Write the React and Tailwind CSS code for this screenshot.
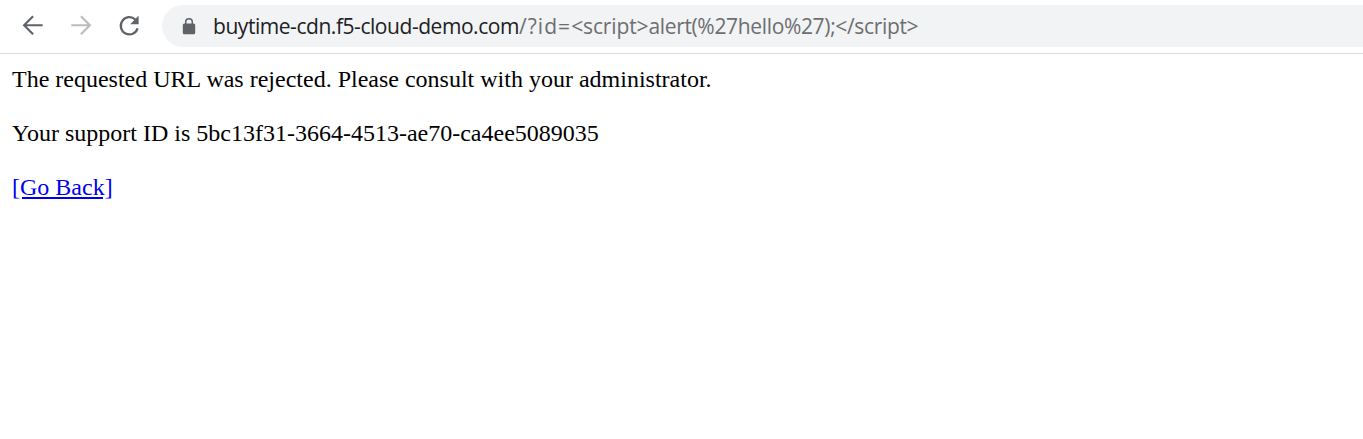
const Icon = ({ children, className }) => (
  <svg viewBox="0 0 30 30" className={className} fill="none" stroke="currentColor" strokeWidth="2.1">{children}</svg>
);
export default function App() {
  return (
    <div className="h-[439px] overflow-hidden bg-white">
      <header className="flex h-[54px] items-start border-b border-[#dadce0] pl-[18px] pt-[5px]">
        <div className="flex h-[42px] w-36 shrink-0 items-center gap-[18px] text-[#5f6368]">
          <Icon className="size-[30px]"><path d="M24.7 14.2H6.2M15.1 5.2L6.1 14.2L15.1 23.2" /></Icon>
          <Icon className="size-[30px] text-[#babcbe]"><path d="M5.3 14.2H23.8M14.9 5.2L23.9 14.2L14.9 23.2" /></Icon>
          <Icon className="size-[30px]">
            <path strokeWidth="2.3" d="M23.6 17.4A8.6 8.6 0 1 1 21.3 8.5" />
            <path fill="currentColor" stroke="none" d="M24.6 4.8V13.2H16.2z" />
          </Icon>
        </div>
        <div className="flex h-[42px] grow items-center rounded-l-full bg-[#f1f3f4] pl-[18px]">
          <svg viewBox="0 0 18 18" className="size-[18px] text-[#5f6368]" fill="none">
            <path d="M5.7 7.5V5.1a3.3 3.3 0 0 1 6.6 0V7.5" stroke="currentColor" strokeWidth="1.5" />
            <rect x="2.8" y="6.5" width="12.4" height="10.7" rx="1.5" fill="currentColor" />
          </svg>
          <div className="ml-[15px] whitespace-pre pt-px font-['Open_Sans',sans-serif] text-[21px] leading-none text-[#202124]"><span className="tracking-[-0.45px]">buytime-cdn.f5-cloud-demo.com</span><span className="text-[#6d6e70]"><span className="tracking-[1.05px]">/?id=</span><span className="tracking-[-0.13px]">{"<script>"}</span><span className="tracking-[-0.34px]">{"alert(%27hello%27);</script>"}</span></span></div>
        </div>
      </header>
      <main className="flex flex-col gap-[27px] px-3 pt-3 font-['Liberation_Serif',serif] text-2xl leading-[27px] text-black">
        <p>The requested URL was rejected. Please consult with your administrator.</p>
        <p>Your support ID is 5bc13f31-3664-4513-ae70-ca4ee5089035</p>
        <p><a href="#" className="text-[#0000ee] underline">[Go Back]</a></p>
      </main>
    </div>
  );
}
